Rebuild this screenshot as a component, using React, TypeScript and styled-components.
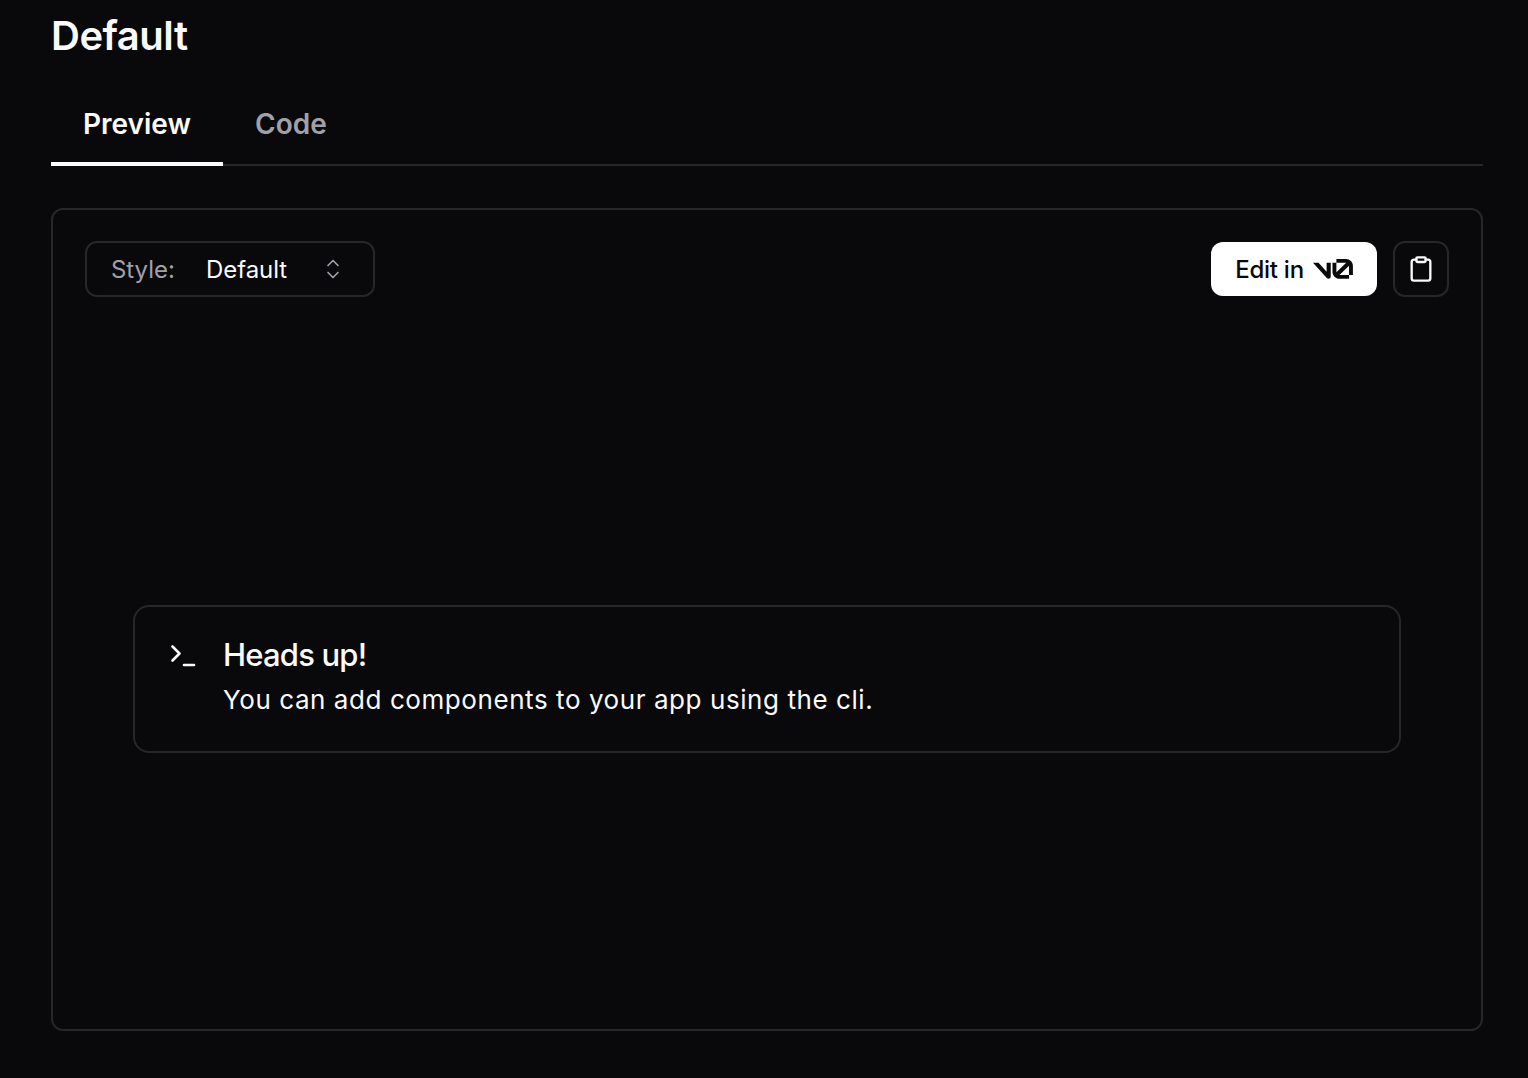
import React from 'react'
import styled, { createGlobalStyle } from 'styled-components'
import { Clipboard, ChevronUp, ChevronDown } from 'lucide-react'

const GlobalStyle = createGlobalStyle`
  html, body {
    margin: 0;
    background: #09090b;
    color: #fafafa;
    font-family: Inter, "Liberation Sans", sans-serif;
  }
  * { box-sizing: border-box; }
`

const Page = styled.div`
  height: 1078px;
  overflow: hidden;
  padding: 8px 45px 0 51px;
`
const Title = styled.h2`
  margin: 0 0 18px;
  font-size: 40px;
  line-height: 56px;
  font-weight: 600;
  letter-spacing: -0.5px;
`
const TabList = styled.div`
  display: flex;
  border-bottom: 2px solid #27272a;
`
const Tab = styled.div<{ $active?: boolean }>`
  height: 84px;
  margin-bottom: -2px;
  padding: 4px 32px 0;
  display: flex;
  align-items: center;
  border-bottom: 4px solid ${p => (p.$active ? '#fafafa' : 'transparent')};
  color: ${p => (p.$active ? '#fafafa' : '#a1a1aa')};
  font-size: 28px;
  font-weight: 600;
`
const Panel = styled.div`
  margin-top: 42px;
  height: 823px;
  border: 2px solid #27272a;
  border-radius: 12px;
  display: flex;
  flex-direction: column;
`
const Toolbar = styled.div`
  display: flex;
  align-items: center;
  justify-content: space-between;
  padding: 31px 32px 0;
`
const Select = styled.div`
  width: 290px;
  height: 56px;
  padding: 0 30px 0 24px;
  border: 2px solid #27272a;
  border-radius: 12px;
  display: flex;
  align-items: center;
  font-size: 24px;
  letter-spacing: -0.05px;
`
const SelectLabel = styled.span`
  width: 95px;
  color: #a1a1aa;
`
const SelectValue = styled.span`
  flex: 1;
`
const Carets = styled.span`
  display: flex;
  flex-direction: column;
  align-items: center;
  color: #a1a1aa;
  svg { display: block; margin: -4px 0; }
`
const Actions = styled.div`
  display: flex;
  align-items: center;
  gap: 16px;
`
const EditButton = styled.button`
  width: 166px;
  height: 54px;
  padding: 0;
  border: 0;
  border-radius: 12px;
  background: #fff;
  color: #09090b;
  font: 500 24px Inter, "Liberation Sans", sans-serif;
  letter-spacing: -0.25px;
  display: flex;
  align-items: center;
  justify-content: center;
  gap: 9px;
`
const CopyButton = styled.button`
  width: 56px;
  height: 56px;
  padding: 0;
  border: 2px solid #27272a;
  border-radius: 12px;
  background: transparent;
  color: #fafafa;
  display: flex;
  align-items: center;
  justify-content: center;
`
const Preview = styled.div`
  flex: 1;
  padding: 32px 80px 0;
  display: flex;
  align-items: center;
`
const Alert = styled.div`
  width: 100%;
  padding: 32px;
  border: 2px solid #27272a;
  border-radius: 16px;
  display: flex;
  gap: 27px;
`
const AlertIcon = styled.svg`
  flex: none;
  width: 29px;
  height: 32px;
  color: #fafafa;
`
const AlertTitle = styled.h5`
  margin: 0 0 9px;
  font-size: 31px;
  line-height: 32px;
  font-weight: 500;
  letter-spacing: -0.8px;
`
const AlertText = styled.div`
  font-size: 26px;
  line-height: 39px;
  letter-spacing: 0.57px;
`

function V0Logo() {
  return (
    <svg width="40" height="20" viewBox="0 0 40 20" fill="currentColor">
      <path d="M23.3919 0H32.9188C36.7819 0 39.9136 3.13165 39.9136 6.99475V16.0805H36.0006V6.99475C36.0006 6.90167 35.9969 6.80925 35.9898 6.71766L26.4628 16.079C26.4949 16.08 26.5272 16.0805 26.5595 16.0805H36.0006V19.7762H26.5595C22.6964 19.7762 19.4788 16.6139 19.4788 12.7508V3.68923H23.3919V12.7508C23.3919 12.9253 23.4054 13.0977 23.4316 13.2668L33.1682 3.6995C33.0861 3.6927 33.003 3.68923 32.9188 3.68923H23.3919V0Z" />
      <path d="M13.7688 19.0956L0 3.68759H5.53933L13.6231 12.7337V3.68759H17.7535V17.5746C17.7535 19.6705 15.1654 20.6584 13.7688 19.0956Z" />
    </svg>
  )
}

export default function App() {
  return (
    <Page>
      <GlobalStyle />
      <Title>Default</Title>
      <TabList>
        <Tab $active>Preview</Tab>
        <Tab>Code</Tab>
      </TabList>
      <Panel>
        <Toolbar>
          <Select>
            <SelectLabel>Style:</SelectLabel>
            <SelectValue>Default</SelectValue>
            <Carets>
              <ChevronUp size={20} strokeWidth={2} />
              <ChevronDown size={20} strokeWidth={2} />
            </Carets>
          </Select>
          <Actions>
            <EditButton>
              Edit in <V0Logo />
            </EditButton>
            <CopyButton>
              <Clipboard size={28} strokeWidth={2} />
            </CopyButton>
          </Actions>
        </Toolbar>
        <Preview>
          <Alert>
            <AlertIcon viewBox="0 0 29 32" fill="none" stroke="currentColor" strokeWidth="2.6" strokeLinecap="round" strokeLinejoin="round">
              <path d="M5.5 7.5l7 7-7 7" />
              <path d="M17 26h10" />
            </AlertIcon>
            <div>
              <AlertTitle>Heads up!</AlertTitle>
              <AlertText>You can add components to your app using the cli.</AlertText>
            </div>
          </Alert>
        </Preview>
      </Panel>
    </Page>
  )
}
